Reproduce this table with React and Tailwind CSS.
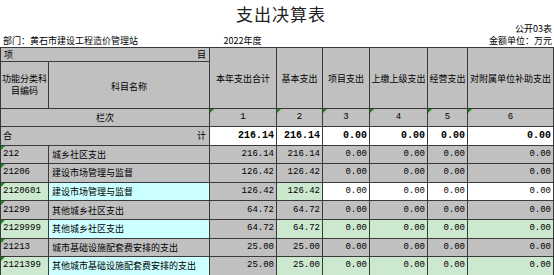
import React from 'react'

const GRAY = 'bg-[#c0c0c0]'
const GREEN = 'bg-[#cce8cf]'
const CYAN = 'bg-[#ccffff]'
const WHITE = 'bg-white'

const cjk = { fontFamily: '"Noto Sans CJK SC", "Noto Sans", sans-serif' }
const num = { fontFamily: '"Liberation Mono", "DejaVu Sans Mono", monospace' }

const rows = [
  { code: '212', name: '城乡社区支出', total: '216.14', basic: '216.14', kind: 'gray' },
  { code: '21206', name: '建设市场管理与监督', total: '126.42', basic: '126.42', kind: 'gray' },
  { code: '2120601', name: '建设市场管理与监督', total: '126.42', basic: '126.42', kind: 'white' },
  { code: '21299', name: '其他城乡社区支出', total: '64.72', basic: '64.72', kind: 'gray' },
  { code: '2129999', name: '其他城乡社区支出', total: '64.72', basic: '64.72', kind: 'green' },
  { code: '21213', name: '城市基础设施配套费安排的支出', total: '25.00', basic: '25.00', kind: 'gray' },
  { code: '2121399', name: '其他城市基础设施配套费安排的支出', total: '25.00', basic: '25.00', kind: 'green' },
]

const Tick = () => (
  <span className="absolute left-0 top-0 w-0 h-0 border-t-[4px] border-r-[4px] border-t-[#1a8a1a] border-r-transparent" />
)

const td = 'border border-[#3a3a3a] p-0 relative'

const App = () => {
  return (
    <div className="w-[554px] h-[275px] bg-white overflow-hidden text-[9px] text-black leading-none" style={cjk}>
      <div className="h-[22px] flex items-end justify-center pl-[8px]">
        <span className="text-[17px] tracking-[1px] text-[#222]">支出决算表</span>
      </div>
      <div className="h-[12px] flex items-center justify-end pr-[2px]">公开03表</div>
      <div className="h-[13px] flex items-center">
        <div className="w-[209px] pl-[3px]">部门：黄石市建设工程造价管理站</div>
        <div className="w-[67px] text-center">2022年度</div>
        <div className="flex-1 text-right pr-[2px]">金额单位：万元</div>
      </div>

      <table className="border-collapse table-fixed w-[553px]">
        <colgroup>
          <col className="w-[48px]" />
          <col className="w-[161px]" />
          <col className="w-[67px]" />
          <col className="w-[46px]" />
          <col className="w-[47px]" />
          <col className="w-[58px]" />
          <col className="w-[40px]" />
          <col className="w-[86px]" />
        </colgroup>
        <tbody>
          <tr className="h-[14px]">
            <td colSpan={2} className={`${td} ${GRAY}`}>
              <div className="flex justify-between px-[3px]">
                <span>项</span>
                <span>目</span>
              </div>
            </td>
            {['本年支出合计', '基本支出', '项目支出', '上缴上级支出', '经营支出', '对附属单位补助支出'].map((h) => (
              <td key={h} rowSpan={2} className={`${td} ${GRAY} text-center whitespace-nowrap`}>{h}</td>
            ))}
          </tr>
          <tr className="h-[47px]">
            <td className={`${td} ${GRAY} text-center leading-[12px]`}>功能分类科<br />目编码</td>
            <td className={`${td} ${GRAY} text-center`}>
              <div className="pt-[3px]">科目名称</div>
            </td>
          </tr>
          <tr className="h-[18px]">
            <td colSpan={2} className={`${td} ${GRAY} text-center`}>栏次</td>
            {[1, 2, 3, 4, 5, 6].map((n) => (
              <td key={n} className={`${td} ${GRAY} text-center`} style={num}>
                <Tick />
                {n}
              </td>
            ))}
          </tr>
          <tr className="h-[18.6px]">
            <td colSpan={2} className={`${td} ${GRAY}`}>
              <div className="flex justify-between px-[2px]">
                <span>合</span>
                <span className="pr-[1px]">计</span>
              </div>
            </td>
            {['216.14', '216.14', '0.00', '0.00', '0.00', '0.00'].map((v, i) => (
              <td key={i} className={`${td} ${WHITE} text-right pr-[2px] font-bold text-[10px]`} style={num}>{v}</td>
            ))}
          </tr>
          {rows.map((r) => {
            const leaf = r.kind !== 'gray'
            const rest = r.kind === 'gray' ? GRAY : r.kind === 'green' ? GREEN : WHITE
            return (
              <tr key={r.code} className="h-[18.6px]">
                <td className={`${td} ${leaf ? GREEN : GRAY} pl-[2px]`} style={num}>
                  <Tick />
                  {r.code}
                </td>
                <td className={`${td} ${leaf ? CYAN : GRAY} pl-[3px]`}>{r.name}</td>
                <td className={`${td} ${GRAY} text-right pr-[2px]`} style={num}>{r.total}</td>
                <td className={`${td} ${leaf ? GREEN : GRAY} text-right pr-[2px]`} style={num}>{r.basic}</td>
                {[0, 1, 2, 3].map((i) => (
                  <td key={i} className={`${td} ${rest} text-right pr-[2px]`} style={num}>0.00</td>
                ))}
              </tr>
            )
          })}
        </tbody>
      </table>
    </div>
  )
}

export default App
